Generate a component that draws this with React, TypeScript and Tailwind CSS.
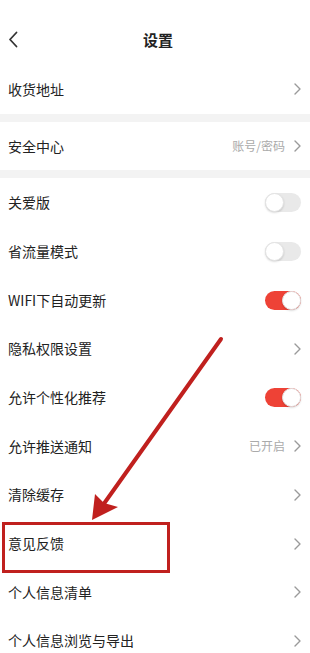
import { FC } from "react";

type Row = {
  label: string;
  kind: "link" | "on" | "off";
  hint?: string;
};

const groups: Row[][] = [
  [{ label: "收货地址", kind: "link" }],
  [{ label: "安全中心", kind: "link", hint: "账号/密码" }],
  [
    { label: "关爱版", kind: "off" },
    { label: "省流量模式", kind: "off" },
    { label: "WIFI下自动更新", kind: "on" },
    { label: "隐私权限设置", kind: "link" },
    { label: "允许个性化推荐", kind: "on" },
    { label: "允许推送通知", kind: "link", hint: "已开启" },
    { label: "清除缓存", kind: "link" },
    { label: "意见反馈", kind: "link" },
    { label: "个人信息清单", kind: "link" },
    { label: "个人信息浏览与导出", kind: "link" },
  ],
];

const Chevron: FC<{ className?: string }> = ({ className }) => (
  <svg width="7" height="12" viewBox="0 0 7 12" className={className}>
    <path d="M1 1l5 5-5 5" fill="none" stroke="currentColor" strokeWidth="1.4" strokeLinecap="round" strokeLinejoin="round" />
  </svg>
);

const Toggle: FC<{ on: boolean }> = ({ on }) => (
  <div
    className={`w-[36px] h-[19px] rounded-full flex items-center ${
      on ? "bg-[#ee4236] justify-end" : "bg-[#e9e9e9] justify-start"
    }`}
  >
    <div className="w-[19px] h-[19px] rounded-full bg-white border border-[#e4e4e4] shadow-[0_1px_2px_rgba(0,0,0,0.15)]" />
  </div>
);

const SettingRow: FC<{ row: Row }> = ({ row }) => (
  <div className="h-[48.7px] flex items-center justify-between pl-[8px] pr-[9px]">
    <span className="text-[14px] text-[#222]">{row.label}</span>
    {row.kind === "link" ? (
      <div className="flex items-center gap-[9px] text-[#9a9a9a]">
        {row.hint && <span className="text-[12px] text-[#aaaaaa]">{row.hint}</span>}
        <Chevron />
      </div>
    ) : (
      <Toggle on={row.kind === "on"} />
    )}
  </div>
);

export default function App() {
  return (
    <div
      className="relative w-[310px] h-[653px] overflow-hidden bg-white"
      style={{ fontFamily: '"Noto Sans CJK SC", "Noto Sans", sans-serif' }}
    >
      <div className="relative h-[65px] flex items-start pt-[26px]">
        <div className="h-[28px] w-full flex items-center justify-center pl-[6px]">
          <span className="text-[15px] font-semibold text-[#222]">设置</span>
        </div>
        <svg width="10" height="17" viewBox="0 0 10 17" className="absolute left-[8px] top-[31px] text-[#333]">
          <path d="M8.5 1.5L2 8.5l6.5 7" fill="none" stroke="currentColor" strokeWidth="1.8" strokeLinecap="round" strokeLinejoin="round" />
        </svg>
      </div>
      {groups.map((g, i) => (
        <div key={i}>
          {i > 0 && <div className="h-[8px] bg-[#f3f3f3]" />}
          {g.map((r) => (
            <SettingRow key={r.label} row={r} />
          ))}
        </div>
      ))}

      <div className="absolute left-[2px] top-[522px] w-[168px] h-[51px] border-[3px] border-[#c0201e]" />
      <svg width="310" height="653" className="absolute inset-0 pointer-events-none">
        <line x1="221" y1="339" x2="103" y2="505" stroke="#c0201e" strokeWidth="4" strokeLinecap="round" />
        <polygon points="92,520 95,494 104,503 118,507" fill="#c0201e" />
      </svg>
    </div>
  );
}
